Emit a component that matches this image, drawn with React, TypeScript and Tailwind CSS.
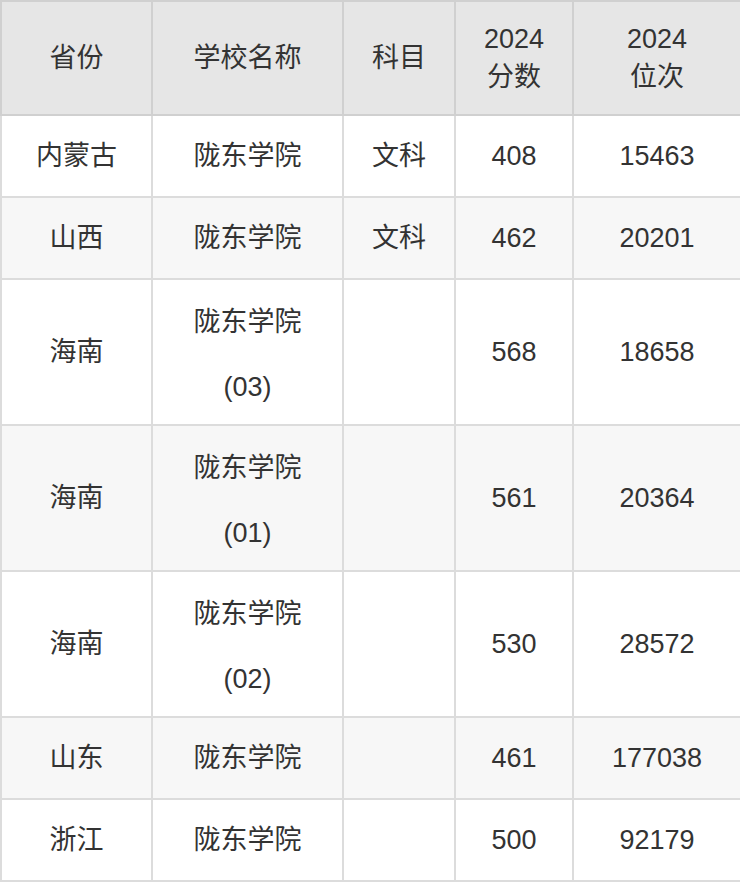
const rows = [
  { province: '内蒙古', school: ['陇东学院'], subject: '文科', score: '408', rank: '15463' },
  { province: '山西', school: ['陇东学院'], subject: '文科', score: '462', rank: '20201' },
  { province: '海南', school: ['陇东学院', '(03)'], subject: '', score: '568', rank: '18658' },
  { province: '海南', school: ['陇东学院', '(01)'], subject: '', score: '561', rank: '20364' },
  { province: '海南', school: ['陇东学院', '(02)'], subject: '', score: '530', rank: '28572' },
  { province: '山东', school: ['陇东学院'], subject: '', score: '461', rank: '177038' },
  { province: '浙江', school: ['陇东学院'], subject: '', score: '500', rank: '92179' },
];

export default function App() {
  return (
    <div className="w-[740px] bg-white font-['Liberation_Sans','Noto_Sans_CJK_SC',sans-serif] text-[27px] text-[#333]">
      <table className="w-[740px] table-fixed border-collapse border-2 border-[#d4d4d4] text-center">
        <colgroup>
          <col className="w-[151px]" />
          <col className="w-[191px]" />
          <col className="w-[112px]" />
          <col className="w-[118px]" />
          <col className="w-[168px]" />
        </colgroup>
        <thead>
          <tr className="h-[114px] bg-[#e6e6e6]">
            <th className="border-2 border-[#d0d0d0] font-normal leading-[38px]">省份</th>
            <th className="border-2 border-[#d0d0d0] font-normal leading-[38px]">学校名称</th>
            <th className="border-2 border-[#d0d0d0] font-normal leading-[38px]">科目</th>
            <th className="border-2 border-[#d0d0d0] font-normal leading-[38px]">
              2024
              <br />
              分数
            </th>
            <th className="border-2 border-[#d0d0d0] font-normal leading-[38px]">
              2024
              <br />
              位次
            </th>
          </tr>
        </thead>
        <tbody>
          {rows.map((r, i) => (
            <tr
              key={i}
              className={`${r.school.length > 1 ? 'h-[146px]' : 'h-[82px]'} ${i % 2 === 1 ? 'bg-[#f7f7f7]' : 'bg-white'}`}
            >
              <td className="border-2 border-[#dcdcdc] leading-[65px]">{r.province}</td>
              <td className={`border-2 border-[#dcdcdc] leading-[65px] ${r.school.length > 1 ? 'pt-[6px]' : ''}`}>
                {r.school.map((s, j) => (
                  <div key={j}>{s}</div>
                ))}
              </td>
              <td className="border-2 border-[#dcdcdc] leading-[65px]">{r.subject}</td>
              <td className="border-2 border-[#dcdcdc] leading-[65px]">{r.score}</td>
              <td className="border-2 border-[#dcdcdc] leading-[65px]">{r.rank}</td>
            </tr>
          ))}
        </tbody>
      </table>
    </div>
  );
}
